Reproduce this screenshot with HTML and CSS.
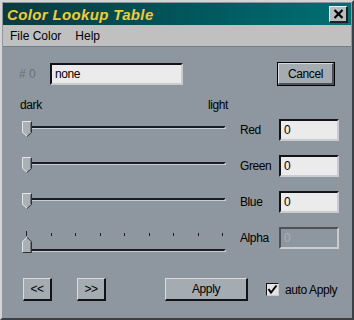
FILE: index.html
```html
<!DOCTYPE html>
<html lang="en">
<head>
    <meta charset="UTF-8">
    <title>Color Lookup Table</title>
    <link rel="stylesheet" href="styles.css">
</head>
<body>
    <div class="window">
        <div class="titlebar">
            <span class="title">Color Lookup Table</span>
            <button class="close-btn">
                <svg width="11" height="10" viewBox="0 0 11 10"><path d="M1.5 1 L9.5 9 M9.5 1 L1.5 9" stroke="#000" stroke-width="2.2"/></svg>
            </button>
        </div>
        <div class="menubar">
            <span>File Color</span>
            <span>Help</span>
        </div>
        <div class="content">
            <div class="top-row">
                <span class="index-label"># 0</span>
                <input class="field name-field" value="none">
                <button class="btn default-btn">Cancel</button>
            </div>
            <div class="range-labels">
                <span>dark</span>
                <span>light</span>
            </div>
            <div class="channels">
                <div class="slider">
                    <div class="track"></div>
                    <svg class="thumb" width="10" height="16" viewBox="0 0 10 16">
                        <polygon points="0.5,0.5 9.5,0.5 9.5,11.5 5,15.5 0.5,11.5" fill="#a9b1b7"/>
                        <polyline points="5,15 0.5,11.5 0.5,0.5 9.5,0.5" fill="none" stroke="#e2e6e8"/>
                        <polyline points="9.5,0.5 9.5,11.5 5,15.5" fill="none" stroke="#2c3238"/>
                        <line x1="8.5" y1="1.5" x2="8.5" y2="11" stroke="#6e767c"/>
                    </svg>
                </div>
                <span class="channel-label">Red</span>
                <input class="field" value="0">

                <div class="slider">
                    <div class="track"></div>
                    <svg class="thumb" width="10" height="16" viewBox="0 0 10 16">
                        <polygon points="0.5,0.5 9.5,0.5 9.5,11.5 5,15.5 0.5,11.5" fill="#a9b1b7"/>
                        <polyline points="5,15 0.5,11.5 0.5,0.5 9.5,0.5" fill="none" stroke="#e2e6e8"/>
                        <polyline points="9.5,0.5 9.5,11.5 5,15.5" fill="none" stroke="#2c3238"/>
                        <line x1="8.5" y1="1.5" x2="8.5" y2="11" stroke="#6e767c"/>
                    </svg>
                </div>
                <span class="channel-label">Green</span>
                <input class="field" value="0">

                <div class="slider">
                    <div class="track"></div>
                    <svg class="thumb" width="10" height="16" viewBox="0 0 10 16">
                        <polygon points="0.5,0.5 9.5,0.5 9.5,11.5 5,15.5 0.5,11.5" fill="#a9b1b7"/>
                        <polyline points="5,15 0.5,11.5 0.5,0.5 9.5,0.5" fill="none" stroke="#e2e6e8"/>
                        <polyline points="9.5,0.5 9.5,11.5 5,15.5" fill="none" stroke="#2c3238"/>
                        <line x1="8.5" y1="1.5" x2="8.5" y2="11" stroke="#6e767c"/>
                    </svg>
                </div>
                <span class="channel-label">Blue</span>
                <input class="field" value="0">

                <div class="slider alpha-slider">
                    <div class="ticks">
                        <i class="tick first"></i><i class="tick"></i><i class="tick"></i>
                        <i class="tick"></i><i class="tick"></i><i class="tick"></i>
                        <i class="tick"></i><i class="tick"></i><i class="tick"></i>
                    </div>
                    <div class="track"></div>
                    <svg class="thumb" width="10" height="16" viewBox="0 0 10 16">
                        <polygon points="5,0.5 9.5,4.5 9.5,15.5 0.5,15.5 0.5,4.5" fill="#a9b1b7"/>
                        <polyline points="0.5,15.5 0.5,4.5 5,0.5" fill="none" stroke="#e2e6e8"/>
                        <polyline points="5,0.5 9.5,4.5 9.5,15.5 0.5,15.5" fill="none" stroke="#2c3238"/>
                        <line x1="8.5" y1="5" x2="8.5" y2="14.5" stroke="#6e767c"/>
                    </svg>
                </div>
                <span class="channel-label">Alpha</span>
                <input class="field" value="0" disabled>
            </div>
            <div class="bottom-row">
                <button class="btn step-btn">&lt;&lt;</button>
                <button class="btn step-btn next-btn">&gt;&gt;</button>
                <button class="btn apply-btn">Apply</button>
                <span class="checkbox">
                    <svg width="11" height="11" viewBox="0 0 11 11"><polyline points="1.5,5 4,8.5 9.5,1.5" fill="none" stroke="#000" stroke-width="2"/></svg>
                </span>
                <span class="check-label">auto Apply</span>
            </div>
        </div>
    </div>
</body>
</html>
```

FILE: styles.css
```css
body {
    margin: 0;
    font-family: "Liberation Sans", Arial, sans-serif;
    font-size: 12px;
    letter-spacing: -0.4px;
    color: #000000;
}
.window {
    width: 354px;
    height: 320px;
    box-sizing: border-box;
    border-top: 2px solid #d4d4d4;
    border-left: 2px solid #d4d4d4;
    border-right: 2px solid #3a4046;
    border-bottom: 2px solid #3a4046;
    background-color: #8e979f;
    display: flex;
    flex-direction: column;
}
.titlebar {
    margin: 1px 1px 0 1px;
    height: 22px;
    background: linear-gradient(to right, #0b3a3e, #005a60 60%, #007074);
    display: flex;
    align-items: center;
    justify-content: space-between;
}
.title {
    font-size: 15px;
    font-weight: bold;
    font-style: italic;
    letter-spacing: 0.35px;
    color: #f0cc34;
    padding-left: 4px;
}
.close-btn {
    width: 19px;
    height: 17px;
    margin-right: 3px;
    padding: 0;
    background-color: #b8bcbe;
    border-top: 1px solid #eeeeee;
    border-left: 1px solid #eeeeee;
    border-right: 2px solid #202020;
    border-bottom: 2px solid #202020;
    display: flex;
    align-items: center;
    justify-content: center;
}
.menubar {
    margin: 0 1px;
    height: 21px;
    background-color: #c0c0c0;
    border-bottom: 1px solid #767e86;
    display: flex;
    align-items: center;
    gap: 14px;
    padding-left: 7px;
    letter-spacing: 0;
}
.content {
    padding: 16px 13px 0 17px;
}
.top-row {
    display: flex;
    align-items: center;
    height: 22px;
}
.index-label {
    width: 31px;
    color: #687078;
    letter-spacing: 0;
}
.field {
    box-sizing: border-box;
    width: 60px;
    height: 22px;
    margin: 0;
    padding: 0 0 0 3px;
    font: inherit;
    letter-spacing: inherit;
    color: #000000;
    background-color: #ebebeb;
    border-top: 2px solid #101418;
    border-left: 2px solid #101418;
    border-right: 2px solid #c8ccd0;
    border-bottom: 2px solid #c8ccd0;
    outline: none;
}
.field:disabled {
    background-color: #8e979f;
    color: #a8b0b6;
    border-top-color: #4a5258;
    border-left-color: #4a5258;
}
.name-field {
    width: 133px;
}
.btn {
    box-sizing: border-box;
    height: 23px;
    padding: 0;
    font: inherit;
    letter-spacing: inherit;
    color: #000000;
    background-color: #a4acb2;
    border-top: 1px solid #d8dce0;
    border-left: 1px solid #d8dce0;
    border-right: 2px solid #101418;
    border-bottom: 2px solid #101418;
    white-space: nowrap;
}
.default-btn {
    width: 56px;
    height: 22px;
    margin-left: auto;
    margin-right: 5px;
    outline: 1px solid #000000;
    border-right-color: #4a5258;
    border-bottom-color: #4a5258;
}
.range-labels {
    width: 208px;
    margin-top: 13px;
    padding-left: 1px;
    height: 14px;
    line-height: 14px;
    display: flex;
    justify-content: space-between;
}
.channels {
    margin-top: 7px;
    display: grid;
    grid-template-columns: 221px 39px 60px;
    grid-auto-rows: 22px;
    row-gap: 14px;
    align-items: center;
}
.slider {
    position: relative;
    align-self: stretch;
    margin-left: 2px;
}
.track {
    margin: 7px 0 0 1px;
    width: 202px;
    height: 0;
    border-top: 2px solid #1a1e22;
    border-bottom: 1px solid #c8ccd0;
    border-right: 2px solid #c8ccd0;
}
.thumb {
    position: absolute;
    left: 1px;
    top: 2px;
}
.alpha-slider .track {
    margin-top: 13px;
}
.alpha-slider .thumb {
    top: 10px;
}
.ticks {
    margin: 5px 0 0 5px;
    width: 197px;
    height: 4px;
    display: flex;
    justify-content: space-between;
    align-items: flex-end;
}
.tick {
    width: 1px;
    height: 3px;
    background-color: #1a1e22;
}
.tick.first {
    height: 5px;
}
.bottom-row {
    margin-top: 29px;
    padding-left: 4px;
    display: flex;
    align-items: center;
}
.step-btn {
    flex: none;
    width: 29px;
}
.next-btn {
    margin-left: 25px;
}
.apply-btn {
    flex: none;
    width: 83px;
    margin-left: 59px;
}
.checkbox {
    flex: none;
    box-sizing: border-box;
    width: 13px;
    height: 13px;
    margin-left: 18px;
    background-color: #e4e4e4;
    border-top: 1px solid #101418;
    border-left: 1px solid #101418;
    border-right: 1px solid #c8ccd0;
    border-bottom: 1px solid #c8ccd0;
    display: flex;
    align-items: center;
    justify-content: center;
}
.check-label {
    margin-left: 6px;
    white-space: nowrap;
}
```
